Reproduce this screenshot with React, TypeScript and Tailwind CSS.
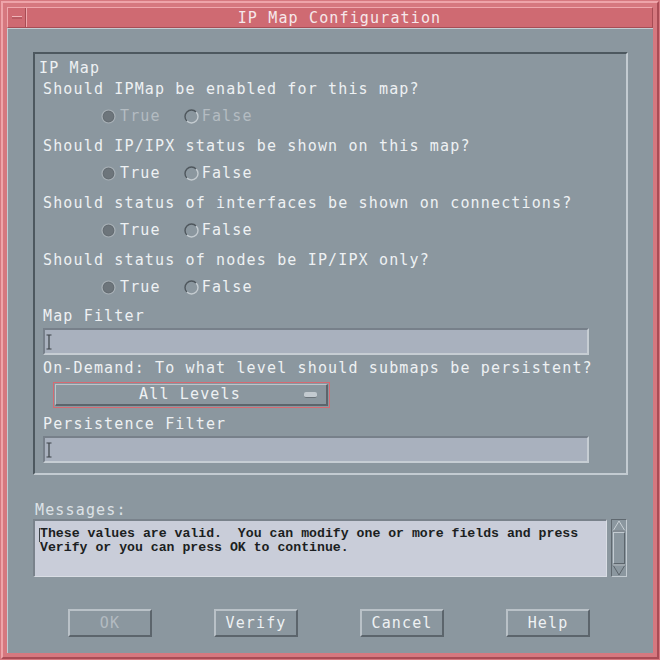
import React from "react"

const mono = "font-['DejaVu_Sans_Mono','Liberation_Mono',monospace]"

function Radio({ on }: { on: boolean }) {
  return (
    <svg width="15" height="15" viewBox="0 0 15 15" className="shrink-0">
      {on ? (
        <>
          <circle cx="7.5" cy="7.5" r="6.5" fill="#666e74" stroke="#a9b1b7" strokeWidth="1.2" />
          <circle cx="7.5" cy="7.5" r="4.8" fill="#6d757b" />
        </>
      ) : (
        <>
          <path d="M12.1 2.9 A6.5 6.5 0 0 0 2.9 12.1" fill="none" stroke="#4f575d" strokeWidth="1.4" />
          <path d="M2.9 12.1 A6.5 6.5 0 0 0 12.1 2.9" fill="none" stroke="#c4cbd0" strokeWidth="1.4" />
        </>
      )}
    </svg>
  )
}

function RadioRow({ disabled }: { disabled?: boolean }) {
  const txt = disabled ? "text-[#b4bcc2]" : "text-[#eef1f3]"
  return (
    <div className="h-[37px] pt-[7px]">
      <div className="h-[20px] flex items-center ml-[58px]">
        <Radio on />
        <span className={`ml-[4px] ${txt}`}>True</span>
        <span className="ml-[23px]"><Radio on={false} /></span>
        <span className={`ml-[3px] ${txt}`}>False</span>
      </div>
    </div>
  )
}

function Cursor() {
  return (
    <svg width="6" height="16" viewBox="0 0 6 16" className="ml-[1px]">
      <path d="M0.5 1 H5.5 M3 1 V15 M0.5 15 H5.5" stroke="#3d4348" strokeWidth="1.2" fill="none" />
    </svg>
  )
}

function TextField() {
  return (
    <div className="w-[546px] h-[27px] bg-[#a9b1be] border-t-2 border-l-2 border-t-[#77808a] border-l-[#77808a] border-b-2 border-r-2 border-b-[#c6cdd3] border-r-[#c6cdd3] flex items-center">
      <Cursor />
    </div>
  )
}

function Btn({ label, disabled }: { label: string; disabled?: boolean }) {
  return (
    <div
      className={`w-[84px] h-[28px] flex items-center justify-center border-t-2 border-l-2 border-t-[#b9c1c7] border-l-[#b9c1c7] border-b-2 border-r-2 border-b-[#5c656c] border-r-[#5c656c] ${
        disabled ? "text-[#b3bbc1]" : "text-[#eef1f3]"
      }`}
    >
      {label}
    </div>
  )
}

export default function App() {
  const questions = [
    { q: "Should IPMap be enabled for this map?", disabled: true },
    { q: "Should IP/IPX status be shown on this map?" },
    { q: "Should status of interfaces be shown on connections?" },
    { q: "Should status of nodes be IP/IPX only?" },
  ]

  return (
    <div className={`w-[660px] h-[660px] bg-[#d6787f] p-[1px] ${mono} text-[15px] tracking-[1.15px]`}>
      <div className="w-full h-full border-t-2 border-l-2 border-[#eea4a9] border-b-2 border-r-2 border-b-[#a94c55] border-r-[#a94c55] p-[4px] flex flex-col">
        {/* title bar */}
        <div className="h-[21px] flex border border-t-[#efa8ad] border-l-[#efa8ad] border-b-[#a74d55] border-r-[#a74d55] bg-[#cf6a72]">
          <div className="w-[18px] h-full flex items-center justify-center border-r border-r-[#a74d55]">
            <div className="w-[10px] h-[3px] bg-[#b95a62] border-t border-t-[#f0b4b8]" />
          </div>
          <div className="flex-1 flex items-center justify-center pt-[1px] border-l border-l-[#efa8ad] text-[#f6e8ea] text-[15px]">
            IP Map Configuration
          </div>
        </div>

        {/* body */}
        <div className="flex-1 bg-[#8b979f] border-t border-t-[#c4ccd2] border-l border-l-[#c4ccd2] px-[25px] pt-[23px] flex flex-col text-[#eef1f3]">
          <div className="h-[423px] border-t-2 border-l-2 border-t-[#4d585f] border-l-[#4d585f] border-b-2 border-r-2 border-b-[#c3cbd1] border-r-[#c3cbd1] pl-[8px]">
            <div className="h-[22px] mt-[3px] flex items-center -ml-[4px]">IP Map</div>
            {questions.map((it, i) => (
              <div key={i}>
                <div className="h-[20px] flex items-center">{it.q}</div>
                <RadioRow disabled={it.disabled} />
              </div>
            ))}
            <div className="h-[20px] flex items-center -mt-[1px]">Map Filter</div>
            <div className="mt-[2px]"><TextField /></div>
            <div className="h-[20px] mt-[3px] flex items-center">On-Demand: To what level should submaps be persistent?</div>
            <div className="mt-[4px] ml-[10px] w-[277px] h-[26px] border border-[#d66a72] p-[1px]">
              <div className="w-full h-full border-t border-l border-t-[#bcc4ca] border-l-[#bcc4ca] border-b-2 border-r-2 border-b-[#5c656c] border-r-[#5c656c] flex items-center">
                <div className="flex-1 text-center pl-[20px]">All Levels</div>
                <div className="w-[13px] h-[6px] rounded-[2px] bg-[#c3cad0] border-b border-b-[#6a737a] mr-[9px]" />
              </div>
            </div>
            <div className="h-[20px] mt-[6px] flex items-center">Persistence Filter</div>
            <div className="mt-[2px]"><TextField /></div>
          </div>

          <div className="h-[20px] mt-[25px] flex items-center ml-[2px] text-[#dde2e6]">Messages:</div>
          <div className="flex -mt-[1px]">
            <div className="w-[574px] h-[58px] bg-[#c9cdd9] border-t-2 border-l-2 border-t-[#79828b] border-l-[#79828b] border-b border-r border-b-[#d9dde4] border-r-[#d9dde4] pl-[5px] pt-[6px] font-['Liberation_Mono',monospace] font-bold text-[13.2px] tracking-[0px] leading-[14px] text-[#1c1f22] relative">
              <div className="absolute left-[4px] top-[7px] w-[1px] h-[14px] bg-[#3d4348]" />
              <div className="whitespace-pre">These values are valid.  You can modify one or more fields and press</div>
              <div className="whitespace-pre">Verify or you can press OK to continue.</div>
            </div>
            <div className="ml-[4px] w-[16px] h-[58px] border border-t-[#606970] border-l-[#606970] border-b-[#c3cbd1] border-r-[#c3cbd1] flex flex-col">
              <svg width="14" height="12" viewBox="0 0 14 12">
                <path d="M7 1 L13 11 H1 Z" fill="#8b979f" stroke="#c8d0d5" strokeWidth="1" />
                <path d="M13 11 H1" stroke="#5c656c" strokeWidth="1" />
              </svg>
              <div className="flex-1 mx-[1px] border-t border-l border-t-[#c3cbd1] border-l-[#c3cbd1] border-b border-r border-b-[#5c656c] border-r-[#5c656c]" />
              <svg width="14" height="12" viewBox="0 0 14 12">
                <path d="M1 1 H13 L7 11 Z" fill="#8b979f" stroke="#5c656c" strokeWidth="1" />
                <path d="M1 1 H13" stroke="#c8d0d5" strokeWidth="1" />
              </svg>
            </div>
          </div>

          <div className="flex mt-[32px] pl-[35px] gap-[62px]">
            <Btn label="OK" disabled />
            <Btn label="Verify" />
            <Btn label="Cancel" />
            <Btn label="Help" />
          </div>
        </div>
      </div>
    </div>
  )
}
